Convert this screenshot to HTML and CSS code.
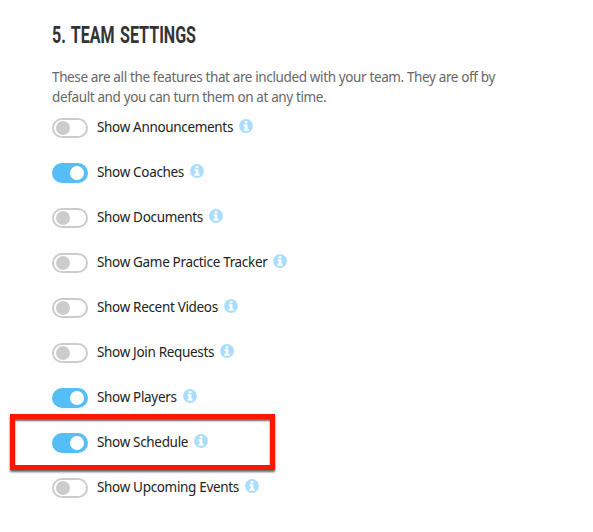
FILE: index.html
```
<!DOCTYPE html>
<html lang="en">
<head>
    <meta charset="UTF-8">
    <meta name="viewport" content="width=device-width, initial-scale=1.0">
    <title>Team Settings</title>
    <link rel="stylesheet" href="styles.css">
</head>
<body>
    <svg class="sprite" width="0" height="0">
        <symbol id="info" viewBox="0 0 14 14">
            <circle cx="7" cy="7" r="6.9" fill="#aaddfc"/>
            <path d="M5.6 2.2h2.8v2H5.6zM4.6 5.2h3.8v4.6h1.2v1.9H4.5V9.8h1.2V7H4.600z" fill="#fff"/>
        </symbol>
    </svg>

    <h1><span>5. TEAM SETTINGS</span></h1>
    <p class="intro">These are all the features that are included with your team. They are off by<br>default and you can turn them on at any time.</p>

    <ul class="settings">
        <li><span class="toggle"></span><span class="label">Show Announcements</span><svg class="info"><use href="#info"/></svg></li>
        <li><span class="toggle on"></span><span class="label">Show Coaches</span><svg class="info"><use href="#info"/></svg></li>
        <li><span class="toggle"></span><span class="label">Show Documents</span><svg class="info"><use href="#info"/></svg></li>
        <li><span class="toggle"></span><span class="label">Show Game Practice Tracker</span><svg class="info"><use href="#info"/></svg></li>
        <li><span class="toggle"></span><span class="label">Show Recent Videos</span><svg class="info"><use href="#info"/></svg></li>
        <li><span class="toggle"></span><span class="label">Show Join Requests</span><svg class="info"><use href="#info"/></svg></li>
        <li><span class="toggle on"></span><span class="label">Show Players</span><svg class="info"><use href="#info"/></svg></li>
        <li class="marked"><span class="toggle on"></span><span class="label">Show Schedule</span><svg class="info"><use href="#info"/></svg></li>
        <li><span class="toggle"></span><span class="label">Show Upcoming Events</span><svg class="info"><use href="#info"/></svg></li>
    </ul>
</body>
</html>
```
FILE: styles.css
```
*, *::before, *::after {
    box-sizing: border-box;
}
body {
    margin: 0;
    padding: 21px 0 0 52px;
    background-color: #fff;
    font-family: "Noto Sans", "Open Sans", sans-serif;
    overflow: hidden;
}
.sprite {
    display: none;
}
h1 {
    margin: 0;
    height: 46px;
    font-family: Roboto, sans-serif;
    font-size: 23px;
    line-height: 30px;
    color: #333;
}
h1 span {
    display: inline-block;
    word-spacing: 2px;
    transform: scaleX(0.698);
    transform-origin: left;
}
.intro {
    margin: 0;
    height: 38px;
    font-size: 13.5px;
    letter-spacing: -0.37px;
    line-height: 20px;
    color: #666;
    white-space: nowrap;
}
.settings {
    margin: 0;
    padding: 0;
    list-style: none;
}
.settings li {
    position: relative;
    display: flex;
    align-items: center;
    height: 45px;
}
.toggle {
    display: flex;
    align-items: center;
    width: 36px;
    height: 20px;
    padding: 0 2px;
    border: 2px solid #ccc;
    border-radius: 10px;
}
.toggle::before {
    content: "";
    width: 14px;
    height: 14px;
    border-radius: 50%;
    background-color: #ccc;
}
.toggle.on {
    justify-content: flex-end;
    border-color: #55bef6;
    background-color: #55bef6;
}
.toggle.on::before {
    background-color: #fff;
}
.label {
    margin: 0 0 1px 9px;
    font-size: 13.5px;
    letter-spacing: -0.33px;
    line-height: 20px;
    color: #222;
    white-space: nowrap;
}
.info {
    width: 14px;
    height: 14px;
    margin: 0 0 3px 6px;
}
/* red frame around the highlighted row */
.marked::after {
    content: "";
    position: absolute;
    left: -42px;
    top: -6px;
    width: 265px;
    height: 56px;
    border: 5px solid #ff1600;
    box-shadow: 0 2px 2px #666, inset 0 2px 2px #666;
}
```
